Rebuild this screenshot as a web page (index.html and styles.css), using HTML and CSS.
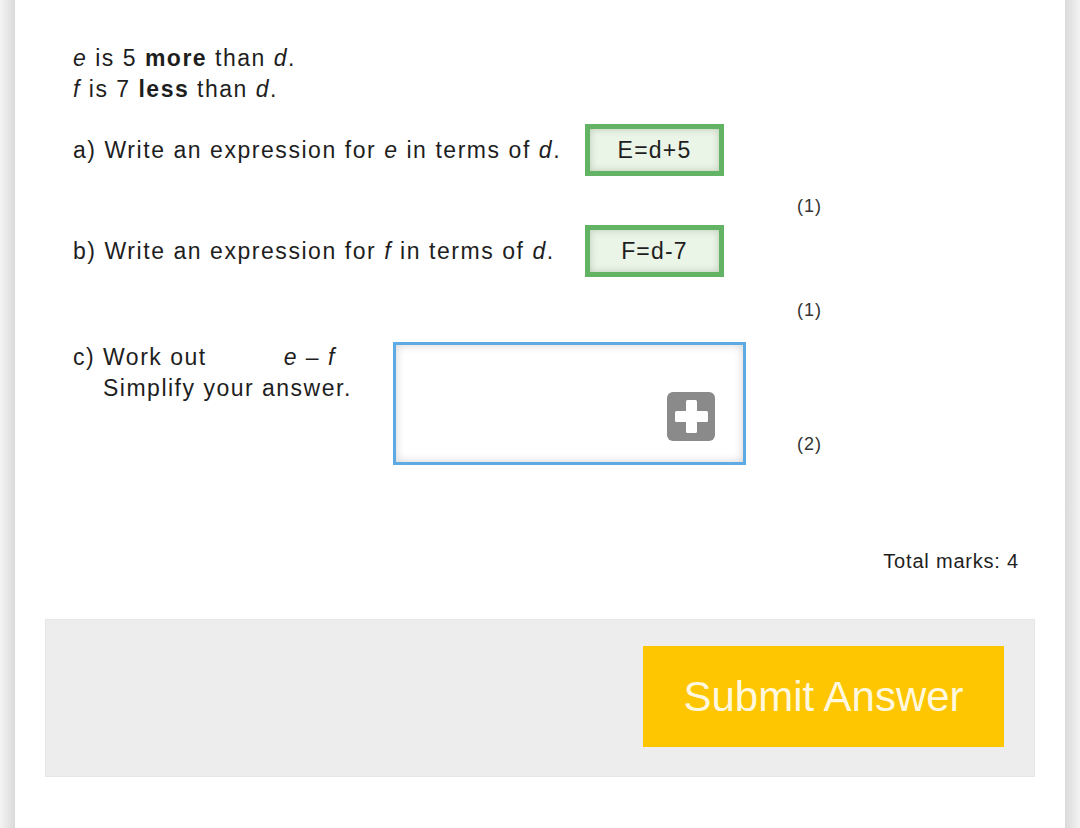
FILE: index.html
```html
<!DOCTYPE html>
<html lang="en">
<head>
<meta charset="utf-8">
<title>Question</title>
<link rel="stylesheet" href="styles.css">
</head>
<body>
<div class="card">
  <div class="question">
    <div class="intro">
      <div class="line"><i>e</i> is 5 <b>more</b> than <i>d</i>.</div>
      <div class="line"><i>f</i> is 7 <b>less</b> than <i>d</i>.</div>
    </div>

    <div class="qrow qrow-a">
      <div class="qlabel">a) Write an expression for <i>e</i> in terms of <i>d</i>.</div>
      <div class="answer">E=d+5</div>
    </div>
    <div class="marks marks-a">(1)</div>

    <div class="qrow qrow-b">
      <div class="qlabel">b) Write an expression for <i>f</i> in terms of <i>d</i>.</div>
      <div class="answer">F=d-7</div>
    </div>
    <div class="marks marks-b">(1)</div>

    <div class="qrow qrow-c">
      <div class="clabel">
        <div class="line">c) Work out<span class="expr"><i>e</i> – <i>f</i></span></div>
        <div class="line indent">Simplify your answer.</div>
      </div>
      <div class="input">
        <div class="plus">
          <svg width="33" height="33" viewBox="0 0 33 33"><rect x="11" y="0" width="11" height="33" rx="1.5" fill="#fff"/><rect x="0" y="11" width="33" height="11" rx="1.5" fill="#fff"/></svg>
        </div>
      </div>
      <div class="marks marks-c">(2)</div>
    </div>

    <div class="total">Total marks: 4</div>
  </div>

  <div class="footer">
    <button class="submit">Submit Answer</button>
  </div>
</div>
</body>
</html>
```

FILE: styles.css
```css
* { box-sizing: border-box; }

html, body {
  margin: 0;
  padding: 0;
}

body {
  width: 1080px;
  height: 828px;
  overflow: hidden;
  padding: 0 15px;
  background: linear-gradient(to right, #f4f4f4 0px, #dadada 15px, #dadada 1065px, #f3f3f3 1080px);
  font-family: "Liberation Sans", Arial, sans-serif;
  color: #1e1e1e;
}

.card {
  background: #fff;
  height: 828px;
  padding-top: 43px;
}

.question {
  padding: 0 46px 0 58px;
}

.line {
  font-size: 23px;
  line-height: 31px;
  letter-spacing: 1.5px;
  white-space: nowrap;
}

.qrow {
  display: flex;
  align-items: center;
}

.qrow-a { margin-top: 19px; }
.qrow-b { margin-top: 8px; }
.qrow-c { margin-top: 21px; align-items: flex-start; }

.qlabel {
  width: 512px;
  font-size: 23px;
  line-height: 31px;
  letter-spacing: 1.55px;
  white-space: nowrap;
}

.answer {
  width: 139px;
  height: 52px;
  border: 5px solid #62b464;
  background: #eaf4e7;
  box-shadow: inset 0 0 7px rgba(60, 90, 50, 0.28);
  font-size: 23px;
  letter-spacing: 1.2px;
  display: flex;
  align-items: center;
  justify-content: center;
  color: #1e1e1e;
}

.marks {
  font-size: 18px;
  line-height: 22px;
  letter-spacing: 1px;
  color: #333;
}

.marks-a { margin-top: 19px; padding-left: 724px; }
.marks-b { margin-top: 22px; padding-left: 724px; }

.clabel {
  width: 320px;
}

.expr {
  margin-left: 77px;
}

.indent {
  padding-left: 30px;
}

.input {
  position: relative;
  width: 353px;
  height: 123px;
  border: 3px solid #5eaae4;
  background: #fff;
  box-shadow: inset 0 0 10px rgba(0, 0, 0, 0.18);
}

.plus {
  position: absolute;
  right: 28px;
  bottom: 21px;
  width: 48px;
  height: 49px;
  border-radius: 6px;
  background: #8a8a8a;
  display: flex;
  align-items: center;
  justify-content: center;
}

.plus svg { display: block; }

.marks-c {
  align-self: flex-end;
  margin-left: 51px;
  margin-bottom: 10px;
}

.total {
  margin-top: 84px;
  text-align: right;
  font-size: 20px;
  line-height: 24px;
  letter-spacing: 0.8px;
}

.footer {
  margin: 46px 30px 0 30px;
  height: 158px;
  background: #ededed;
  border: 1px solid #e6e6e6;
  display: flex;
  justify-content: flex-end;
  padding: 26px 30px 0 0;
}

.submit {
  width: 361px;
  height: 101px;
  border: none;
  background: #fdc600;
  color: #fff8de;
  font-family: "Liberation Sans", Arial, sans-serif;
  font-size: 42px;
  padding: 0;
  cursor: pointer;
}
```
